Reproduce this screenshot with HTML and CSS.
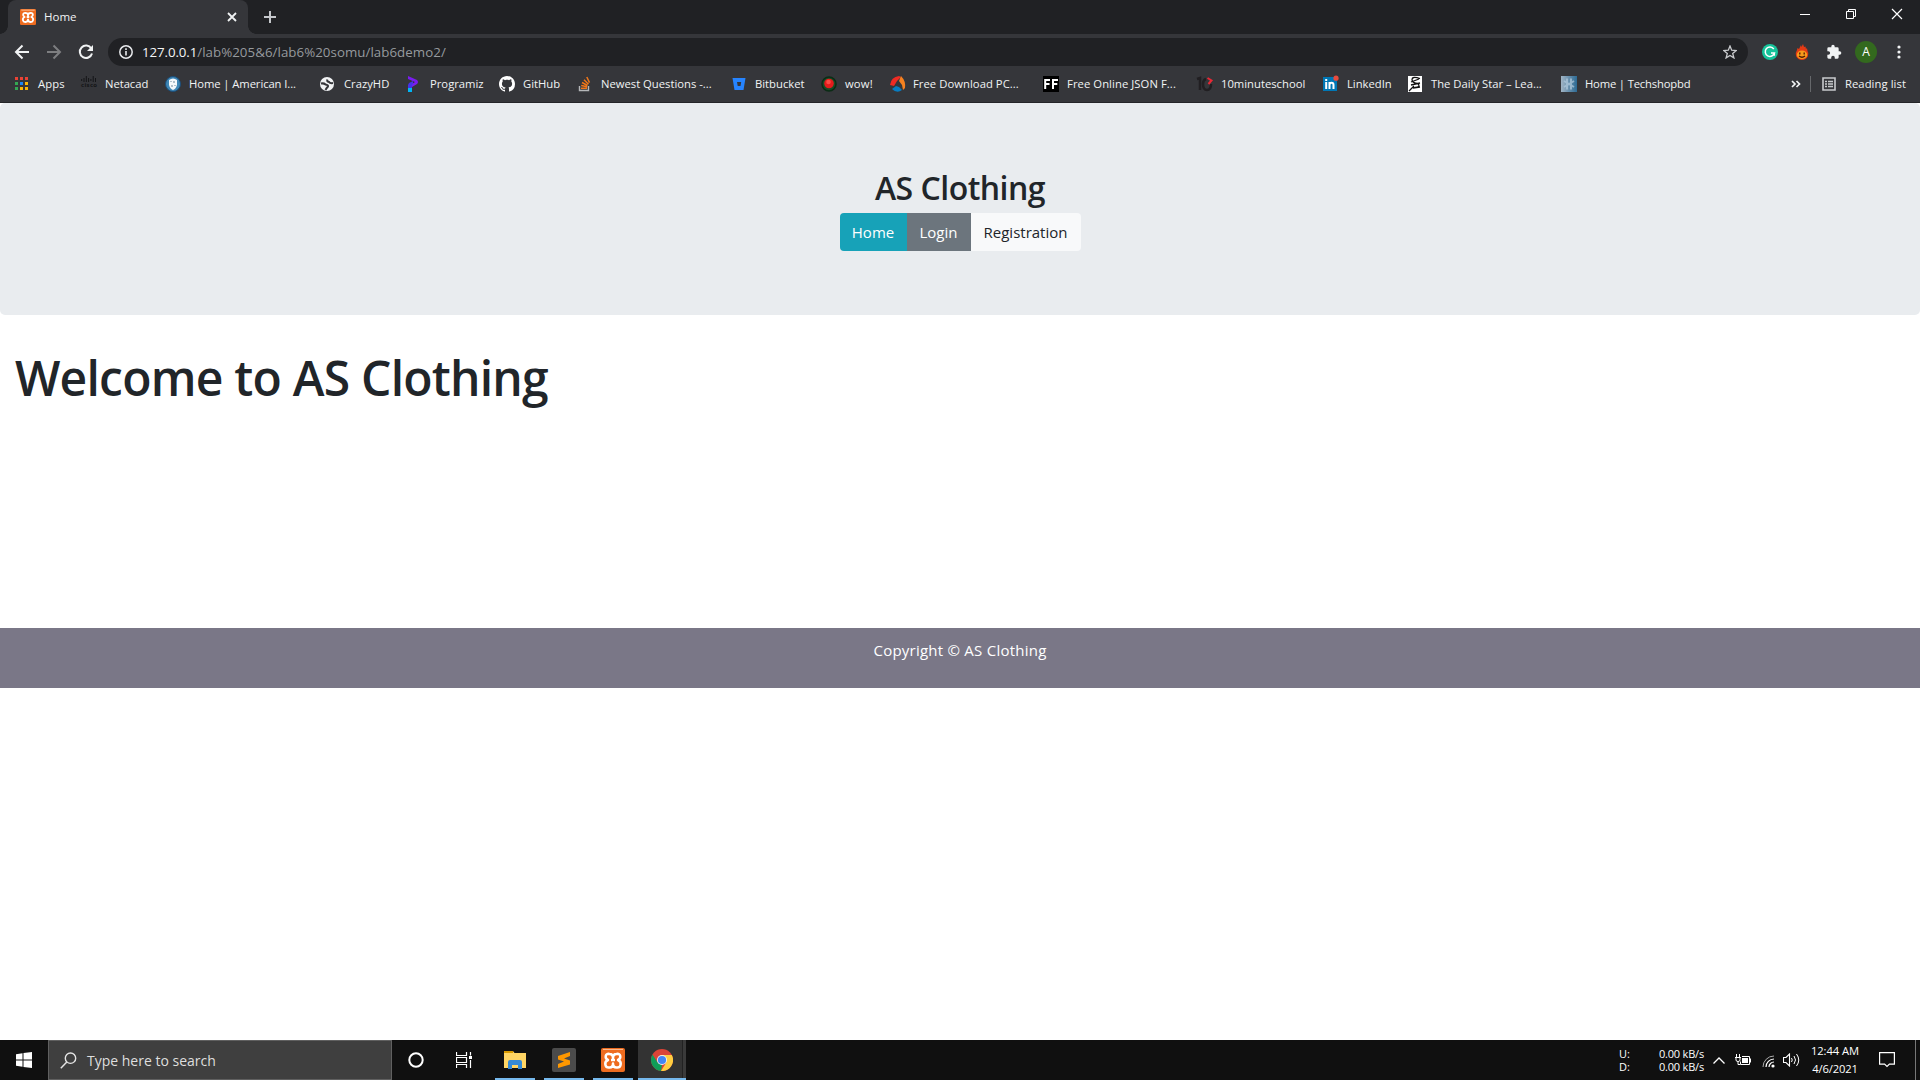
FILE: index.html
```html
<!DOCTYPE html>
<html lang="en">
<head>
<meta charset="utf-8">
<title>Home</title>
<link rel="stylesheet" href="styles.css">
</head>
<body>
<div class="screen">
  <div class="tabstrip">
    <div class="tab">
      <svg class="tab-icon" width="16" height="16" viewBox="0 0 24 24"><rect width="24" height="24" rx="2" fill="#ee6c20"/><rect x="2" y="1" width="20" height="1.5" fill="#f9b98c"/><path d="M8.500 6C4 5 3.500 10.500 7 12c-4.500 2-3 8 1.500 7.500 3 0 3.500-2 3.500-4 0 2 .5 4 3.500 4 4.500.5 6-5.500 1.500-7.500 3.500-1.500 3-7-1.500-6-3 0-3.500 2-3.500 4 0-2-.5-4-3.500-4zM10 12h4" fill="none" stroke="#fff" stroke-width="2.800" stroke-linejoin="round"/></svg>
      <span class="tab-title">Home</span>
      <svg class="tab-close" width="10" height="10" viewBox="0 0 10 10"><path d="M1 1l8 8M9 1l-8 8" stroke="#f1f3f4" stroke-width="1.8"/></svg>
    </div>
    <svg class="new-tab" width="14" height="14" viewBox="0 0 14 14"><path d="M7 1v12M1 7h12" stroke="#c5c8cb" stroke-width="2"/></svg>
    <div class="window-buttons">
      <svg width="46" height="28" viewBox="0 0 46 28"><path d="M18 14.500h10" stroke="#fff"/></svg>
      <svg width="46" height="28" viewBox="0 0 46 28"><path d="M18.500 11.500h7v7h-7zM20.500 11.500v-2h7v7h-2" fill="none" stroke="#fff"/></svg>
      <svg width="46" height="28" viewBox="0 0 46 28"><path d="M18 9l10 10M28 9l-10 10" stroke="#fff" stroke-width="1.200"/></svg>
    </div>
  </div>

  <div class="toolbar">
    <div class="nav-icons">
      <svg width="16" height="16" viewBox="0 0 16 16"><path d="M15 8H2M8.500 1.500L2 8l6.500 6.500" fill="none" stroke="#f1f3f4" stroke-width="2"/></svg>
      <svg width="16" height="16" viewBox="0 0 16 16"><path d="M1 8h13M7.500 1.500L14 8l-6.500 6.500" fill="none" stroke="#7d7e80" stroke-width="2"/></svg>
      <svg width="16" height="16" viewBox="0 0 16 16"><path d="M13.300 4.500A6.200 6.200 0 1 0 14 9.500" fill="none" stroke="#f1f3f4" stroke-width="2"/><path d="M15 1v6H9z" fill="#f1f3f4"/></svg>
    </div>
    <div class="omnibox">
      <svg width="14" height="14" viewBox="0 0 14 14"><circle cx="7" cy="7" r="6.200" fill="none" stroke="#e8eaed" stroke-width="1.500"/><path d="M7 6v4.500M7 3.300v1.600" stroke="#e8eaed" stroke-width="1.600"/></svg>
      <span class="url"><span class="host">127.0.0.1</span><span class="path">/lab%205&amp;6/lab6%20somu/lab6demo2/</span></span>
      <svg class="star" width="14" height="14" viewBox="0 0 14 14"><path d="M7 1l1.700 4.200 4.500.3-3.500 2.900 1.200 4.500L7 10.400l-3.900 2.500 1.200-4.500L.8 5.500l4.500-.3z" fill="none" stroke="#c8cacd" stroke-width="1.300"/></svg>
    </div>
    <div class="extensions">
      <svg width="16" height="16" viewBox="0 0 16 16"><circle cx="8" cy="8" r="8" fill="#15c39a"/><path d="M11.800 5A4.700 4.700 0 1 0 12.500 9H9M12.300 9v2.700" fill="none" stroke="#fff" stroke-width="1.500"/></svg>
      <svg width="14" height="16" viewBox="0 0 14 16"><path d="M2 6l.5-2 1.500 1L6 1l.500 2L8 0l1 3 1.500-.5.5 2.500 1-1 .5 3Q14 9 13 12q-2 4-6 4t-6-4Q0 9 2 6z" fill="#e43a14"/><ellipse cx="7" cy="10.800" rx="5.200" ry="4.300" fill="#f79a1b"/><path d="M4.800 8.500v2M9.200 8.500v2M4 12q3 2.500 6 0" fill="none" stroke="#4b1a05" stroke-width="1.300"/></svg>
      <svg width="16" height="16" viewBox="0 0 24 24"><path fill="#f1f3f4" d="M20.500 11H19V7a2 2 0 0 0-2-2h-4V3.500a2.500 2.500 0 0 0-5 0V5H4a2 2 0 0 0-2 2v3.800h1.500a2.700 2.700 0 0 1 0 5.400H2V20a2 2 0 0 0 2 2h3.800v-1.500a2.700 2.700 0 0 1 5.400 0V22H17a2 2 0 0 0 2-2v-4h1.500a2.500 2.500 0 0 0 0-5z"/></svg>
      <span class="avatar">A</span>
      <svg width="4" height="14" viewBox="0 0 4 14"><g fill="#f1f3f4"><circle cx="2" cy="2" r="1.600"/><circle cx="2" cy="7" r="1.600"/><circle cx="2" cy="12" r="1.600"/></g></svg>
    </div>
  </div>

  <div class="bookmarks">
    <div class="bm bm-apps"><svg width="16" height="16" viewBox="0 0 16 16"><g><path d="M1 1h3v3H1zM6 1h3v3H6zM11 1h3v3h-3z" fill="#ea4335"/><path d="M1 6h3v3H1zM1 11h3v3H1z" fill="#34a853"/><path d="M6 6h3v3H6z" fill="#1a86f5"/><path d="M11 6h3v3h-3zM6 11h3v3H6zM11 11h3v3h-3z" fill="#fbb605"/></g></svg><span>Apps</span></div>
    <div class="bm bm-netacad"><svg width="16" height="16" viewBox="0 0 16 16"><path d="M.7 3v2M3 2v4M5.300 0v6M7.600 2v4M9.900 3v2M12.200 0v6M14.500 2v4" stroke="#141517"/><text x="0" y="11" class="cisco" textLength="16">cisco</text></svg><span>Netacad</span></div>
    <div class="bm bm-american"><svg width="16" height="16" viewBox="0 0 16 16"><circle cx="8" cy="8" r="7.500" fill="#3e86b5" stroke="#1c4e79"/><path d="M4 4q4-3 8 0v5q-1 4-4 5-3-1-4-5z" fill="#f4f8fb"/><path d="M6 5v1M9 5v2M7 9v2M10 9v1" stroke="#6d899d"/></svg><span>Home | American I...</span></div>
    <div class="bm bm-crazy"><svg width="16" height="16" viewBox="0 0 16 16"><circle cx="8" cy="8" r="7" fill="#f1f3f4"/><path d="M2 7.500q3-.5 4.500 1 3 .5 2.500 2-1.500 1.500-2.500 3.500M8.500 3.500q-1 2 1.500 2.500 1 1.500 4 1" fill="none" stroke="#35363a" stroke-width="2"/></svg><span>CrazyHD</span></div>
    <div class="bm bm-programiz"><svg width="16" height="16" viewBox="0 0 16 16"><path d="M2 0l9 4q2 2 0 4L6 11V8l3-2-7-3z" fill="#7a1cf0"/><path d="M3 7l4-2v3l-1 1v7H2V9z" fill="#4532e8"/><path d="M2 12h4v4H2z" fill="#00b5f5"/></svg><span>Programiz</span></div>
    <div class="bm bm-github"><svg width="16" height="16" viewBox="0 0 16 16"><path fill="#fff" d="M8 0C3.580 0 0 3.580 0 8c0 3.540 2.290 6.530 5.470 7.590.4.070.55-.17.55-.38 0-.19-.01-.82-.01-1.490-2.010.37-2.530-.49-2.690-.94-.09-.23-.48-.94-.82-1.130-.28-.15-.68-.52-.01-.53.63-.01 1.080.58 1.230.82.720 1.210 1.870.87 2.330.66.070-.52.280-.87.510-1.070-1.780-.2-3.640-.89-3.640-3.950 0-.87.310-1.590.82-2.150-.08-.2-.36-1.020.08-2.120 0 0 .67-.21 2.200.82.640-.18 1.320-.27 2-.27s1.360.09 2 .27c1.530-1.040 2.200-.82 2.200-.82.440 1.100.16 1.920.08 2.120.51.560.82 1.270.82 2.150 0 3.070-1.870 3.750-3.650 3.950.29.25.54.730.54 1.480 0 1.070-.01 1.930-.01 2.200 0 .21.15.46.55.38A8.010 8.010 0 0 0 16 8c0-4.420-3.580-8-8-8z"/></svg><span>GitHub</span></div>
    <div class="bm bm-newest"><svg width="16" height="16" viewBox="0 0 16 16"><path d="M2.500 10v4.500h9V10" fill="none" stroke="#b5b7b9" stroke-width="1.400"/><path d="M4 12.300h6M4.200 9.600l6 1.100M5 6.500l5.500 3M7 3.700l4.500 4.500M9.800 1l2.700 5.600" stroke="#f0771a" stroke-width="1.500"/></svg><span>Newest Questions -...</span></div>
    <div class="bm bm-bitbucket"><svg width="16" height="16" viewBox="0 0 16 16"><path fill="#2684ff" fill-rule="evenodd" d="M1.500 2h13l-2 12h-9zM6 6l.7 4h2.800l.7-4z"/></svg><span>Bitbucket</span></div>
    <div class="bm bm-wow"><svg width="16" height="16" viewBox="0 0 16 16"><circle cx="8" cy="8" r="7" fill="#174b27" stroke="#0b2c15" stroke-width="1.500"/><circle cx="8" cy="7.500" r="4.800" fill="#e31c1c"/><circle cx="7.500" cy="6" r="2.300" fill="#fa4a44"/></svg><span>wow!</span></div>
    <div class="bm bm-download"><svg width="16" height="16" viewBox="0 0 16 16"><path d="M0 9Q1 1 9 0l2 1-4 4-3 5z" fill="#ef2b23"/><path d="M11 0q5 5 4 12l-2 2-1-5-3-4z" fill="#f58220"/><path d="M2 13l4-3 3 1 3 3q-5 4-10-1z" fill="#087cc0"/></svg><span>Free Download PC...</span></div>
    <div class="bm bm-json"><svg width="16" height="16" viewBox="0 0 16 16"><path d="M0 0h16v16H0z" fill="#000"/><path d="M2.200 13V4H7M2.200 8h4.300M10 13V4h5M10 8h4.300" fill="none" stroke="#fff" stroke-width="2"/></svg><span>Free Online JSON F...</span></div>
    <div class="bm bm-ten"><svg width="16" height="16" viewBox="0 0 16 16"><path d="M0 3l3-1v12M9 3Q6 4 6 8q0 6 4 6t4-6" fill="none" stroke="#211f22" stroke-width="2.500"/><path d="M10.500 2l4 2.500-3 3.500" fill="none" stroke="#ea2835" stroke-width="2"/></svg><span>10minuteschool</span></div>
    <div class="bm bm-linkedin"><svg width="16" height="16" viewBox="0 0 16 16"><path d="M0 1h14v14H0z" fill="#0077b5"/><path d="M3.200 6v7M3.200 3v2M6.500 13V6M6.500 9q0-2.200 2-2.200t2 2.200v4" stroke="#fff" stroke-width="2" fill="none"/><circle cx="13" cy="2.200" r="2.600" fill="#e84a3c"/></svg><span>LinkedIn</span></div>
    <div class="bm bm-star"><svg width="16" height="16" viewBox="0 0 16 16"><path d="M1 0h14v16H1z" fill="#fff"/><path d="M13 2.500Q5 0 5 3.500t6 4q3 4-3 4M4 6l8-3M2 15l5-5M4 9l9-2M6 12l7-1" fill="none" stroke="#111" stroke-width="1.300"/></svg><span>The Daily Star – Lea...</span></div>
    <div class="bm bm-tech"><svg width="16" height="16" viewBox="0 0 16 16"><defs><linearGradient id="tg"><stop stop-color="#a1b4c4"/><stop offset="1" stop-color="#2d6b95"/></linearGradient></defs><path d="M0 0h16v16H0z" fill="url(#tg)"/><path d="M6 2.500v11M10 2.500v11M3 5l10 6M13 5L3 11" stroke="#a9c4d8" stroke-width="2" opacity=".8"/></svg><span>Home | Techshopbd</span></div>
    <div class="reading">
      <svg width="10" height="8" viewBox="0 0 10 8"><path d="M1 1l3 3-3 3M5.500 1l3 3-3 3" fill="none" stroke="#f1f3f4" stroke-width="1.700"/></svg>
      <i class="divider"></i>
      <svg width="14" height="14" viewBox="0 0 14 14"><path d="M1 1h12v12H1z" fill="none" stroke="#c8cacd" stroke-width="1.600"/><path d="M3 4.500h2M6 4.500h5M3 7h2M6 7h5M3 9.500h2M6 9.500h5" stroke="#c8cacd" stroke-width="1.300"/></svg>
      <span>Reading list</span>
    </div>
  </div>

  <main class="page">
    <header class="jumbotron">
      <h2>AS Clothing</h2>
      <nav class="btn-group"><a class="btn home">Home</a><a class="btn login">Login</a><a class="btn register">Registration</a></nav>
    </header>
    <h1>Welcome to AS Clothing</h1>
    <footer>Copyright © AS Clothing</footer>
  </main>

  <div class="taskbar">
    <div class="start"><svg width="16" height="16" viewBox="0 0 16 16"><path fill="#fff" d="M0 2.200L6.500 1.300v6.200H0zM7.500 1.100L16 0v7.500H7.500zM0 8.500h6.500v6.200L0 13.800zM7.500 8.500H16V16l-8.500-1.100z"/></svg></div>
    <div class="search"><svg width="17" height="17" viewBox="0 0 17 17"><circle cx="10.500" cy="6.200" r="5.200" fill="none" stroke="#e4e4e4" stroke-width="1.400"/><path d="M6.800 10L.8 16.200" stroke="#e4e4e4" stroke-width="1.500"/></svg><span>Type here to search</span></div>
    <div class="task cortana"><svg width="16" height="16" viewBox="0 0 16 16"><circle cx="8" cy="8" r="6.700" fill="none" stroke="#fff" stroke-width="2"/></svg></div>
    <div class="task view"><svg width="16" height="16" viewBox="0 0 16 16"><path d="M.5 0v3.500h10V0M.5 16v-3.500h10V16M.5 5.500h10v5H.5zM14.500 0v3.500M14.500 8v8" fill="none" stroke="#fff" stroke-width="1.200"/><path d="M13 4h3v3h-3z" fill="#fff"/></svg></div>
    <div class="task app folder"><svg width="22" height="20" viewBox="0 0 22 20"><path d="M0 1h9l1.500 2H22v15H0z" fill="#ffd564"/><path d="M0 1h9v2H0z" fill="#d99a00"/><path d="M4 19v-7q0-2 2-2h10q2 0 2 2v7h-4v-4H8v4z" fill="#3489d5"/></svg></div>
    <div class="task app sublime"><svg width="24" height="24" viewBox="0 0 24 24"><rect width="24" height="24" rx="2" fill="#4b4b4b"/><path d="M6 8l12-4v4l-6 2.500 6 2v4L6 20v-4l6-2.500-6-2z" fill="#ff9800"/></svg></div>
    <div class="task app xampp"><svg width="24" height="24" viewBox="0 0 24 24"><rect width="24" height="24" rx="2" fill="#ee6c20"/><rect x="2" y="1" width="20" height="1" fill="#f9b98c"/><path d="M8.500 6C4 5 3.500 10.500 7 12c-4.500 2-3 8 1.500 7.500 3 0 3.500-2 3.500-4 0 2 .5 4 3.500 4 4.500.5 6-5.500 1.500-7.500 3.500-1.500 3-7-1.500-6-3 0-3.500 2-3.500 4 0-2-.5-4-3.500-4zM10 12h4" fill="none" stroke="#fff" stroke-width="2.500" stroke-linejoin="round"/></svg></div>
    <div class="task app chrome"><svg width="22" height="22" viewBox="0 0 22 22"><circle cx="11" cy="11" r="11" fill="#db4437"/><path d="M1.500 5.500L6.700 13.500 11 16l-1 6A11 11 0 0 1 1.500 5.500z" fill="#0f9d58"/><path d="M11 6h9.800A11 11 0 0 1 10 22l5.300-8.500z" fill="#ffcd40"/><circle cx="11" cy="11" r="5" fill="#f1f1f1"/><circle cx="11" cy="11" r="4.100" fill="#4285f4"/></svg></div>
    <div class="tray">
      <div class="net-label"><span>U:</span><span>D:</span></div>
      <div class="net-value"><span>0.00 kB/s</span><span>0.00 kB/s</span></div>
      <svg class="chevron" width="12" height="7" viewBox="0 0 12 7"><path d="M.5 6.500L6 1l5.500 5.500" fill="none" stroke="#fff" stroke-width="1.300"/></svg>
      <svg class="battery" width="16" height="12" viewBox="0 0 16 12"><path d="M1.500 0v3M4.500 0v3M0 3.500h6M1 4v2q0 1.500 2 1.500T5 6V4M3 7.500v3h2M7 2.500h7.500v8H5.500v-3M15.500 4.500v4" fill="none" stroke="#fff"/><path d="M7 4h6v5H7z" fill="#fff"/></svg>
      <svg class="wifi" width="14" height="13" viewBox="0 0 14 13"><path d="M1 12A11 11 0 0 1 12 1" fill="none" stroke="#aaa"/><path d="M4 12a8 8 0 0 1 8-8M7 12a5 5 0 0 1 5-5" fill="none" stroke="#fff" stroke-width="1.200"/><circle cx="11" cy="11" r="1.600" fill="#fff"/></svg>
      <svg class="sound" width="17" height="14" viewBox="0 0 17 14"><path d="M.5 4.500h2.500L6.500 1v12L3 9.500H.5z" fill="none" stroke="#fff" stroke-width="1.100"/><path d="M8.500 5q1.500 2 0 4M11 3q3 4 0 8M13.500 1q4.500 6 0 12" fill="none" stroke="#fff"/></svg>
      <div class="clock"><span class="time">12:44 AM</span><span class="date">4/6/2021</span></div>
      <svg class="notice" width="16" height="16" viewBox="0 0 16 16"><path d="M.6.6h14.800v11.500h-5L8 14.500l-2.400-2.400h-5z" fill="none" stroke="#fff" stroke-width="1.200"/></svg>
      <i class="show-desktop"></i>
    </div>
  </div>
</div>
</body>
</html>
```
FILE: styles.css
```css
*{box-sizing:border-box}
body{margin:0;background:#fff;font-family:"Open Sans","Noto Sans",sans-serif}
svg{display:block;flex:none}
span,a{white-space:nowrap}
.screen{width:1920px;height:1080px;display:flex;flex-direction:column;overflow:hidden}

/* tab strip */
.tabstrip{height:34px;background:#202124;display:flex;align-items:flex-start;padding-left:8px}
.tab{width:240px;height:34px;background:#35363a;border-radius:8px 8px 0 0;display:flex;align-items:center;padding-left:12px;position:relative}
.tab::before,.tab::after{content:"";position:absolute;bottom:0;width:8px;height:8px}
.tab::before{left:-8px;background:radial-gradient(circle at 0 0,#202124 7.5px,#35363a 8px)}
.tab::after{right:-8px;background:radial-gradient(circle at 100% 0,#202124 7.5px,#35363a 8px)}
.tab-title{margin-left:8px;width:183px;font-size:11.500px;line-height:16px;padding-bottom:1px;color:#f1f3f4}
.new-tab{margin:10px 0 0 15px}
.window-buttons{display:flex;margin-left:auto}

/* toolbar */
.toolbar{height:36px;background:#35363a;display:flex;align-items:center}
.nav-icons{width:108px;display:flex;gap:16px;padding-left:14px}
.omnibox{width:1640px;height:28px;border-radius:14px;background:#202124;display:flex;align-items:center;padding:0 11px}
.url{margin-left:9px;font-size:13.300px;line-height:26px}
.host{color:#f4f5f6;letter-spacing:-.1px}
.path{color:#969a9e;letter-spacing:.05px}
.star{margin-left:auto}
.extensions{display:flex;align-items:center;margin-left:14px}
.extensions>:nth-child(2){margin-left:17px}
.extensions>:nth-child(3){margin-left:17px}
.avatar{width:22px;height:22px;border-radius:50%;background:#33691e;color:#fff;font-size:12px;line-height:22px;text-align:center;margin:0 20px 0 13px}

/* bookmarks bar */
.bookmarks{height:33px;background:#35363a;border-bottom:1px solid #242528;display:flex;align-items:center;padding:0 14px 4px;font-size:11.250px;color:#f1f3f4}
.bm{display:flex;align-items:center;gap:8px;flex:none}
.bm svg{overflow:visible}
.bm span,.reading span{line-height:16px;padding-bottom:1px}
.cisco{font:700 6px "Open Sans",sans-serif;fill:#141517}
.bm-apps{width:67px;letter-spacing:.1px}
.bm-netacad{width:84px;letter-spacing:-.05px}
.bm-american{width:154px;letter-spacing:-.08px}
.bm-crazy{width:87px}
.bm-programiz{width:93px}
.bm-github{width:78px}
.bm-newest{width:154px}
.bm-bitbucket{width:90px}
.bm-wow{width:69px;letter-spacing:.15px}
.bm-download{width:153px;letter-spacing:.05px}
.bm-json{width:154px;letter-spacing:.07px}
.bm-ten{width:126px}
.bm-linkedin{width:84px}
.bm-star{width:154px}
.bm-tech{width:140px;letter-spacing:-.17px}
.bm-crazy{gap:9px}
.bm-download{gap:7px}
.reading{margin-left:auto;display:flex;align-items:center;letter-spacing:.07px}
.divider{width:1px;height:16px;background:#66686b;margin:0 11px 0 9px}
.reading span{margin-left:9px}

/* page */
.page{height:937px;background:#fff;color:#212529}
.jumbotron{height:212px;background:#e9ecef;border-radius:5px;padding-top:65px;display:flex;flex-direction:column;align-items:center}
h2{margin:0 0 6px;font-size:32px;font-weight:600;line-height:39px;letter-spacing:-.52px}
.btn-group{display:flex;height:38px;border-radius:4px;overflow:hidden}
.btn{font-size:15px;line-height:38px;text-align:center;color:#fff}
.home{width:67px;background:#17a2b8}
.login{width:64px;background:#6c757d}
.register{width:110px;background:#f8f9fa;color:#212529}
h1{margin:34px 0 0;padding-left:15px;height:279px;font-size:48px;font-weight:600;line-height:58px;letter-spacing:-.77px}
footer{height:60px;background:#7a7787;color:#fff;font-size:15px;line-height:24px;padding-top:10px;text-align:center;letter-spacing:.24px}

/* taskbar */
.taskbar{height:40px;background:#101010;display:flex;color:#fff}
.start{width:48px;display:flex;align-items:center;justify-content:center}
.search{width:344px;border:1px solid #606060;background:#3f3f3f;display:flex;align-items:center;padding-left:11px;font-size:14px;color:#dedede}
.search span{margin-left:10px}
.task{display:flex;align-items:center;justify-content:center;width:48px}
.view{padding-right:1px}
.app{width:40px;border-bottom:2px solid #76b9ed;margin-left:9px;padding-top:2px}
.folder{margin-left:7px}
.chrome{width:48px;margin-left:5px;background:linear-gradient(90deg,#333 44px,#222 44px,#222 45px,#3a3a3a 45px)}
.tray{margin-left:auto;width:301px;display:flex;align-items:center;font-size:11.200px}
.net-label,.net-value{display:flex;flex-direction:column;line-height:13px;font-size:11px}
.net-label{width:40px}
.net-value{width:54px;letter-spacing:-.2px}
.battery{margin-left:10px}
.wifi{margin:2px 0 0 11px}
.sound{margin-left:7px}
.clock{width:70px;display:flex;flex-direction:column;align-items:center;line-height:18px}
.time{letter-spacing:-.05px}
.date{letter-spacing:-.15px}
.notice{margin-left:9px}
.show-desktop{width:1px;height:40px;background:#777;margin-left:20px}
```
